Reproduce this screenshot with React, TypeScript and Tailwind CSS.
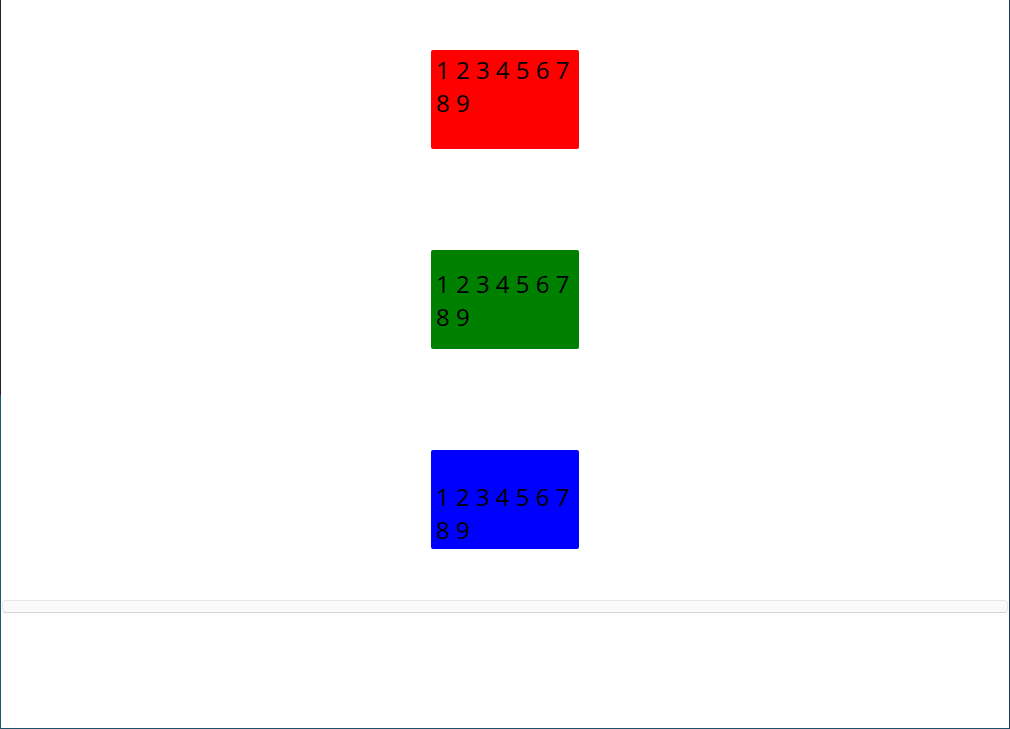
import React from "react"

const boxes = [
  { color: "bg-[#ff0000]", align: "justify-start" },
  { color: "bg-[#008000]", align: "justify-center" },
  { color: "bg-[#0000ff]", align: "justify-end" },
]

const App = () => {
  return (
    <div className="flex h-[729px] w-[1010px] bg-white" style={{ fontFamily: '"Open Sans", sans-serif' }}>

      {/* left window edge */}
      <div className="flex w-px flex-col">
        <div className="h-[395px] bg-[#222222]" />
        <div className="flex-1 bg-[#1b5a72]" />
      </div>

      <div className="flex flex-1 flex-col border-r border-b border-r-[#1d3a5c] border-b-[#1b5168]">

        {/* BOXES */}
        <div className="flex flex-col items-center gap-[101px] pt-[50px] pb-[51px]">
          {boxes.map((box, i) => (
            <div
              key={i}
              className={`flex h-[99px] w-[148px] flex-col rounded-[2px] pl-[5px] pr-[7px] py-[3px] ${box.color} ${box.align}`}
            >
              <p className="text-[24px] leading-[33px] text-black">1 2 3 4 5 6 7 8 9</p>
            </div>
          ))}
        </div>

        {/* BAR */}
        <div className="mx-px h-[13px] rounded-[4px] border border-[#e6e6e6] border-b-[#d4d4d4] bg-[#fafafa]" />

        <div className="flex-1 bg-[#fefefe]" />
      </div>
    </div>
  )
}

export default App
